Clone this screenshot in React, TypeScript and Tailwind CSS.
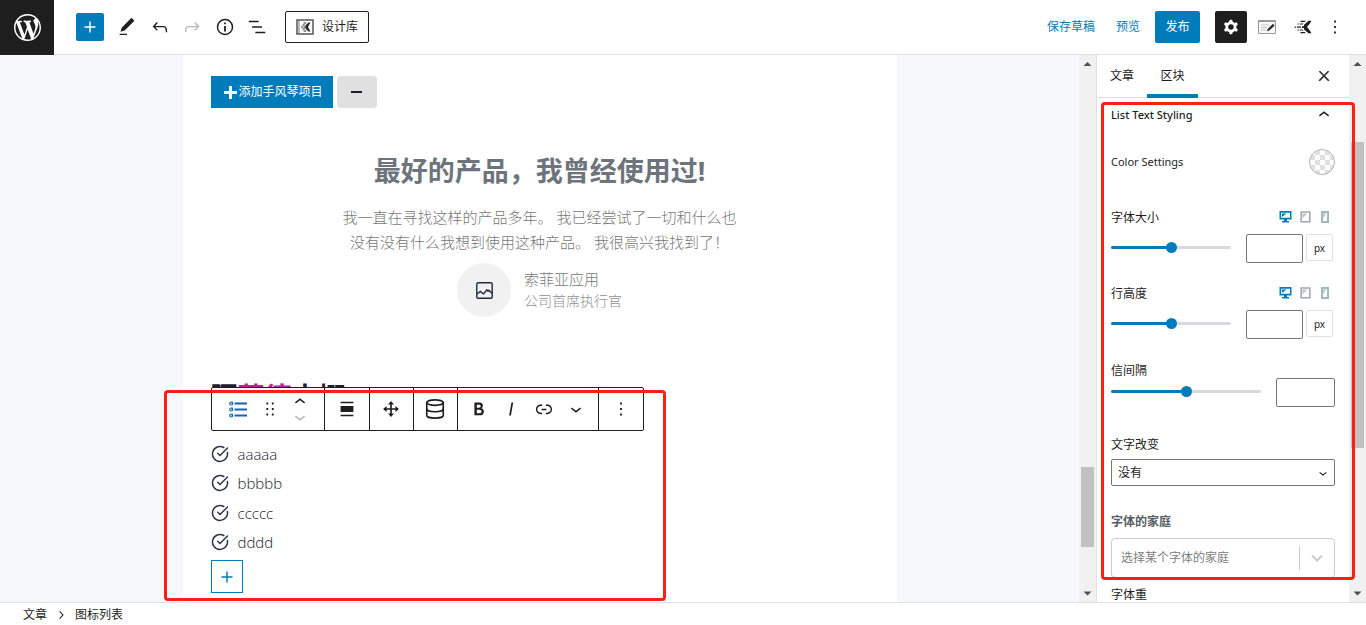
import { useState } from 'react'
import type { ReactNode } from 'react'
import { CircleCheckBig, Database } from 'lucide-react'

const ICONS = {
  plus: 'M18 11.2h-5.2V6h-1.6v5.2H6v1.6h5.2V18h1.6v-5.2H18z',
  edit: 'M20.1 5.1L16.9 2 6.2 12.7l-1.3 4.4 4.5-1.3L20.1 5.1zM4 20.8h8v-1.5H4v1.5z',
  undo: 'M18.3 11.7c-.6-.6-1.4-.9-2.3-.9H6.7l2.9-3.3-1.1-1-4.5 5L8.5 16l1-1-2.7-2.7H16c.5 0 .9.2 1.3.5 1 1 1 3.4 1 4.5v.3h1.5v-.2c0-1.5 0-4.3-1.5-5.7z',
  redo: 'M15.6 6.5l-1.1 1 2.9 3.3H8c-.9 0-1.7.3-2.3.9-1.4 1.5-1.4 4.2-1.4 5.6v.2h1.5v-.3c0-1.1 0-3.5 1-4.5.3-.3.7-.5 1.3-.5h9.2L14.5 15l1.1 1.1 4.6-4.6-4.6-5z',
  outline: 'M13.8 5.2H3v1.5h10.8V5.2zm-3.6 12v1.5H21v-1.5H10.2zm7.2-6H6.6v1.5h10.8v-1.5z',
  info: 'M12 3a9 9 0 1 0 0 18 9 9 0 0 0 0-18zm0 16.4a7.4 7.4 0 1 1 0-14.8 7.4 7.4 0 0 1 0 14.8zM11 7h2v2h-2zM11 10.8h2V17h-2z',
  more: 'M13 19h-2v-2h2v2zm0-6h-2v-2h2v2zm0-6h-2V5h2v2z',
  close: 'M13 11.8l6.1-6.3-1-1-6.1 6.2-6.1-6.2-1 1 6.1 6.3-6.5 6.7 1 1 6.5-6.6 6.5 6.6 1-1z',
  up: 'M6.5 12.4L12 8l5.5 4.4-.9 1.2L12 10l-4.5 3.6-1-1.2z',
  down: 'M17.5 11.6L12 16l-5.5-4.4.9-1.2L12 14l4.5-3.6 1 1.2z',
  right: 'M10.6 6L9.4 7l4.6 5-4.6 5 1.2 1 5.4-6z',
  drag: 'M8 7h2V5H8v2zm0 6h2v-2H8v2zm0 6h2v-2H8v2zm6-14v2h2V5h-2zm0 8h2v-2h-2v2zm0 6h2v-2h-2v2z',
  align: 'M5 4.2h14v1.5H5zM5 8.8h14v6.4H5zM5 18.3h14v1.5H5z',
  move: 'M12 2.5l3.600 4.200h-2.600v4.300h4.300V8.400l4.200 3.600-4.200 3.600v-2.600h-4.300v4.300h2.600L12 21.500l-3.600-4.200h2.600v-4.300H6.700v2.600L2.500 12l4.200-3.600v2.600h4.300V6.700H8.400z',
  bold: 'M14.7 11.3c1-.6 1.5-1.6 1.5-3 0-2.3-1.3-3.4-4-3.4H7v14h5.8c1.4 0 2.5-.3 3.3-1 .8-.7 1.2-1.7 1.2-2.9.1-1.9-.8-3.1-2.6-3.7zm-5.1-4h2.3c.6 0 1.1.1 1.4.4.3.3.5.7.5 1.2s-.2 1-.5 1.200c-.3.3-.8.4-1.400.4H9.600V7.300zm4.600 9c-.4.3-1 .4-1.700.4H9.600v-3.900h2.900c.7 0 1.300.2 1.700.5.4.3.6.8.6 1.500s-.2 1.200-.6 1.500z',
  italic: 'M12.5 5L10 19h1.9l2.5-14z',
  link: 'M15.6 7.2H14v1.5h1.6c2 0 3.7 1.7 3.7 3.7s-1.7 3.7-3.7 3.7H14v1.5h1.6c2.8 0 5.2-2.3 5.2-5.2 0-2.9-2.3-5.2-5.2-5.2zM4.7 12.4c0-2 1.7-3.7 3.7-3.7H10V7.2H8.4c-2.9 0-5.2 2.3-5.2 5.2 0 2.9 2.3 5.2 5.2 5.2H10v-1.5H8.4c-2 0-3.7-1.7-3.7-3.7zm4.6.9h5.3v-1.500H9.300v1.500z',
  cog: 'M10.289 4.836A1 1 0 0111.275 4h1.306a1 1 0 01.987.836l.244 1.466c.787.26 1.503.679 2.108 1.218l1.393-.522a1 1 0 011.216.437l.653 1.13a1 1 0 01-.23 1.273l-1.148.944a6.025 6.025 0 010 2.435l1.149.946a1 1 0 01.23 1.272l-.653 1.13a1 1 0 01-1.216.437l-1.394-.522c-.605.54-1.32.958-2.108 1.218l-.244 1.466a1 1 0 01-.987.836h-1.306a1 1 0 01-.986-.836l-.244-1.466a5.995 5.995 0 01-2.108-1.218l-1.394.522a1 1 0 01-1.217-.436l-.653-1.131a1 1 0 01.23-1.272l1.149-.946a6.026 6.026 0 010-2.435l-1.148-.944a1 1 0 01-.23-1.272l.653-1.131a1 1 0 011.217-.437l1.393.522a5.994 5.994 0 012.108-1.218l.244-1.466zM14.929 12a3 3 0 11-6 0 3 3 0 016 0z',
}

const ITEMS = ['aaaaa', 'bbbbb', 'ccccc', 'dddd']

function Icon({ name, className = 'size-[22px]' }: { name: keyof typeof ICONS; className?: string }) {
  return (
    <svg viewBox="0 0 24 24" fill="currentColor" className={className} aria-hidden="true">
      <path fillRule="evenodd" d={ICONS[name]} />
    </svg>
  )
}

function WordPressLogo() {
  return (
    <svg viewBox="0 0 20 20" fill="currentColor" className="size-[27px]" aria-hidden="true">
      <path d="M20 10c0-5.51-4.49-10-10-10C4.48 0 0 4.49 0 10c0 5.52 4.48 10 10 10 5.51 0 10-4.48 10-10zM7.78 15.37L4.37 6.22c.55-.02 1.17-.08 1.17-.08.5-.06.44-1.13-.06-1.11 0 0-1.45.11-2.37.11-.18 0-.37 0-.58-.01C4.12 2.69 6.87 1.11 10 1.11c2.33 0 4.45.87 6.05 2.34-.68-.11-1.65.39-1.65 1.58 0 .74.45 1.36.9 2.1.35.61.55 1.36.55 2.46 0 1.49-1.4 5-1.4 5l-3.03-8.37c.54-.02.82-.17.82-.17.5-.05.44-1.25-.06-1.22 0 0-1.44.12-2.38.12-.87 0-2.33-.12-2.33-.12-.5-.03-.56 1.2-.06 1.22l.92.08 1.26 3.41zM17.41 10c.24-.64.74-1.87.43-4.25.7 1.29 1.05 2.71 1.05 4.25 0 3.29-1.73 6.24-4.4 7.78.97-2.59 1.94-5.2 2.92-7.78zM6.1 18.09C3.12 16.65 1.11 13.53 1.11 10c0-1.3.23-2.48.72-3.59C3.25 10.3 4.67 14.2 6.1 18.09zm4.03-6.63l2.58 6.98c-.86.29-1.76.45-2.71.45-.79 0-1.57-.11-2.29-.33.81-2.38 1.62-4.74 2.42-7.1z" />
    </svg>
  )
}

// Kadence mark: speed lines running into an arrow
function KadenceIcon() {
  return (
    <svg viewBox="0 0 18 14" fill="currentColor" className="h-[14px] w-[18px]" aria-hidden="true">
      <path d="M17.500.8h-3L10 4.700V6.200H8v1.800h2v1.400l4.500 3.900h3L15.500 10 13 7l2.500-3z" />
      <path d="M6.500.8H12l-1.400 1.300H6.500zM3.500 3.400h1.300v1.200H3.500zM5.800 3.400h3.700l-1 1.200H5.800zM.5 6.400h1.400v1.300H.5zM2.900 6.400H7v1.300H2.900zM3.500 9.400h1.300v1.200H3.500zM5.800 9.400h2.900l1 1.200H5.800zM6.500 12h4.100l1.400 1.300H6.500z" />
    </svg>
  )
}

function DesignIcon() {
  return (
    <svg viewBox="0 0 18 16" className="h-4 w-[18px]" aria-hidden="true">
      <path d="M1 1h16v14H1z" fill="none" stroke="#555" strokeWidth="1.500" />
      <path d="M3 1v14" stroke="#777" />
      <g fill="#2b2b2b">
        <path d="M14.500 3.500h-2L9.500 6.200v1.200H8.200v1.300h1.300v1.100l3 2.700h2L12 8z" />
        <path d="M7.500 3.500h3.200l-.9 1H7.500zM6.500 5.500h2.300v1H6.500zM5 7.500h2.500v1H5zM6.500 9.500h2.300v1H6.500zM7.500 11.500h2.300l.9 1H7.500z" />
      </g>
    </svg>
  )
}

function TemplateIcon() {
  return (
    <svg viewBox="0 0 18 14" className="h-[14px] w-[18px]" fill="none" aria-hidden="true">
      <path d="M.5.5h17v13H.5z" stroke="#999" fill="#f7f7f7" />
      <path d="M.5 1.500h17" stroke="#999" />
      <path d="M3 5h8M3 7.500h6.500M3 10h5" stroke="#c4c4c4" />
      <path d="M9 11.300l.7-2.300 5.200-5.200 1.700 1.600-5.300 5.200z" fill="#2b2b2b" />
    </svg>
  )
}

function IconListIcon() {
  return (
    <svg viewBox="0 0 18 17" className="h-[17px] w-[18px]" fill="none" stroke="#1464ae" aria-hidden="true">
      <circle cx="2.200" cy="2.500" r="1.500" strokeWidth="1.200" />
      <circle cx="2.200" cy="8.500" r="1.500" strokeWidth="1.200" />
      <circle cx="2.200" cy="14.500" r="1.500" strokeWidth="1.200" />
      <path d="M5.500 2.500H18M5.500 8.500H18M5.500 14.500H18" strokeWidth="1.800" />
      <path d="M2 2.600L4.200.5M2 8.600l2.200-2.100M2 14.600l2.200-2.100" strokeWidth=".8" />
    </svg>
  )
}

function HeaderButton({ label, children, className = '' }: { label: string; children: ReactNode; className?: string }) {
  return (
    <button type="button" aria-label={label} className={`flex size-8 items-center justify-center rounded-xs ${className}`}>
      {children}
    </button>
  )
}

function Header() {
  return (
    <header className="flex h-[55px] shrink-0 items-center border-b border-[#e0e0e0] bg-white">
      <a href="#dashboard" aria-label="WordPress" className="-mb-px flex h-[55px] w-[54px] items-center justify-center bg-[#1e1e1e] text-white">
        <WordPressLogo />
      </a>
      <button type="button" aria-label="添加区块" className="ml-[22px] flex size-7 items-center justify-center rounded-xs bg-[#007cba] text-white">
        <Icon name="plus" />
      </button>
      <div className="ml-[7px] flex w-[162px] justify-between">
        <HeaderButton label="工具"><Icon name="edit" /></HeaderButton>
        <HeaderButton label="撤销"><Icon name="undo" /></HeaderButton>
        <HeaderButton label="重做" className="text-[#b9b9b9]"><Icon name="redo" /></HeaderButton>
        <HeaderButton label="详情"><Icon name="info" /></HeaderButton>
        <HeaderButton label="列表视图"><Icon name="outline" /></HeaderButton>
      </div>
      <button type="button" className="ml-3 flex h-8 items-center gap-2 rounded-xs border border-[#1e1e1e] px-[10px]">
        <DesignIcon />
        设计库
      </button>

      <div className="ml-auto flex items-center pr-[15px]">
        <button type="button" className="text-[#007cba]">保存草稿</button>
        <button type="button" className="ml-[21px] text-[#007cba]">预览</button>
        <button type="button" className="ml-[15px] h-8 w-[45px] rounded-xs bg-[#007cba] text-white">发布</button>
        <HeaderButton label="设置" className="ml-[15px] bg-[#1e1e1e] text-white"><Icon name="cog" /></HeaderButton>
        <HeaderButton label="模板" className="ml-1"><TemplateIcon /></HeaderButton>
        <HeaderButton label="Kadence" className="ml-1"><KadenceIcon /></HeaderButton>
        <HeaderButton label="选项"><Icon name="more" /></HeaderButton>
      </div>
    </header>
  )
}

// Static scrollbar track; the thumb sits in the flow between the two arrows
function Scrollbar({ thumb }: { thumb: string }) {
  return (
    <div className="flex w-[17px] shrink-0 flex-col items-center bg-[#f1f1f1]" aria-hidden="true">
      <svg viewBox="0 0 17 17" className="size-[17px] shrink-0"><path d="M4.500 11h8l-4-4z" fill="#505050" /></svg>
      <div className={`w-[13px] shrink-0 bg-[#c1c1c1] ${thumb}`} />
      <svg viewBox="0 0 17 17" className="mt-auto size-[17px] shrink-0"><path d="M4.500 6.500h8l-4 4z" fill="#505050" /></svg>
    </div>
  )
}

function ToolButton({ label, className = '', children }: { label: string; className?: string; children: ReactNode }) {
  return (
    <button type="button" aria-label={label} className={`flex h-full items-center justify-center ${className}`}>
      {children}
    </button>
  )
}

function BlockToolbar() {
  return (
    <div className="absolute top-[10px] left-0 flex h-11 divide-x divide-[#1e1e1e] rounded-xs border border-[#1e1e1e] bg-white">
      <div className="flex px-3">
        <ToolButton label="图标列表" className="w-7"><IconListIcon /></ToolButton>
        <ToolButton label="拖动" className="w-9"><Icon name="drag" /></ToolButton>
        <div className="flex w-6 flex-col items-center justify-center">
          <button type="button" aria-label="上移" className="flex h-[15px] items-center"><Icon name="up" /></button>
          <button type="button" aria-label="下移" className="flex h-[15px] items-center text-[#b5b5b5]"><Icon name="down" /></button>
        </div>
      </div>
      <ToolButton label="对齐" className="w-[45px]"><Icon name="align" /></ToolButton>
      <ToolButton label="间距" className="w-11"><Icon name="move" className="size-5" /></ToolButton>
      <ToolButton label="动态内容" className="w-11"><Database size={22} strokeWidth={1.8} /></ToolButton>
      <div className="flex w-[141px] px-[5px]">
        <ToolButton label="加粗" className="flex-1"><Icon name="bold" /></ToolButton>
        <ToolButton label="斜体" className="flex-1"><Icon name="italic" /></ToolButton>
        <ToolButton label="链接" className="flex-1"><Icon name="link" /></ToolButton>
        <ToolButton label="更多" className="flex-1"><Icon name="down" /></ToolButton>
      </div>
      <ToolButton label="选项" className="w-11"><Icon name="more" /></ToolButton>
    </div>
  )
}

function Canvas() {
  return (
    <main className="min-w-0 flex-1 overflow-hidden bg-[#f5f9fc]">
      <div className="mx-auto min-h-full w-full max-w-[714px] bg-white px-7 pt-[21px]">
        <div className="flex gap-1">
          <button type="button" className="flex h-8 items-center gap-[2px] bg-[#007cba] pr-[10px] pl-[13px] text-white">
            <svg viewBox="0 0 13 13" className="size-[13px]" aria-hidden="true">
              <path d="M6.500 0v13M0 6.500h13" stroke="currentColor" strokeWidth="3" />
            </svg>
            添加手风琴项目
          </button>
          <button type="button" aria-label="删除" className="flex h-8 w-10 items-center justify-center rounded-sm bg-[#e0e0e0]">
            <span className="h-[2px] w-[11px] bg-[#1a202c]" />
          </button>
        </div>

        {/* Testimonial */}
        <section className="text-center">
          <h2 className="mt-[43px] text-[27px] leading-10 font-bold text-[#6d747c]">最好的产品，我曾经使用过!</h2>
          <p className="mt-[14px] text-[15px] leading-[25px] font-light text-[#777]">
            我一直在寻找这样的产品多年。 我已经尝试了一切和什么也
            <br />
            没有没有什么我想到使用这种产品。 我很高兴我找到了！
          </p>
          <div className="mt-2 flex items-center justify-center gap-[13px] text-left font-light">
            <span className="flex size-[54px] items-center justify-center rounded-full bg-[#f1f1f1]">
              <svg viewBox="0 0 17 17" className="size-[17px]" fill="none" stroke="#1f2a40" strokeWidth="1.400" aria-hidden="true">
                <rect x=".8" y=".8" width="15.400" height="15.400" rx="1.200" />
                <path d="M1 12l3.300-2.500 1.700 1.300 1.700 1 3-4 1.300 1.500 1-1L16 11.500" />
              </svg>
            </span>
            <div>
              <div className="text-[15px] leading-[22px] text-[#777]">索菲亚应用</div>
              <div className="text-[14px] leading-[22px] text-[#909090]">公司首席执行官</div>
            </div>
          </div>
        </section>

        {/* Icon list with its toolbar over the heading above it */}
        <section className="relative mt-[60px]">
          <h2 className="text-[27px] leading-10 font-bold text-[#1a202c]">
            隔<span className="text-[#c41ba0]">蓝德</span>大概
          </h2>
          <BlockToolbar />
          <ul className="mt-[22px] flex h-[118px] flex-col">
            {ITEMS.map(item => (
              <li key={item} className="flex flex-1 items-center gap-[9px] font-['Open_Sans','Noto_Sans',sans-serif] text-[15px] font-light text-[#1a202c]">
                <CircleCheckBig size={18} strokeWidth={2} className="text-[#2d3748]" />
                {item}
              </li>
            ))}
          </ul>
          <button type="button" aria-label="添加项目" className="mt-[3px] flex h-[33px] w-8 items-center justify-center border border-[#007cba] text-[#007cba]">
            <Icon name="plus" />
          </button>
          <div className="pointer-events-none absolute top-[13px] -left-[47px] h-[211px] w-[502px] rounded-sm border-3 border-[#ff1f12]" />
        </section>
      </div>
    </main>
  )
}

function DeviceIcons() {
  return (
    <div className="flex items-center gap-2 pr-[6px]">
      <button type="button" aria-label="桌面">
        <svg viewBox="0 0 13 12" className="h-3 w-[13px]" aria-hidden="true">
          <path fillRule="evenodd" d="M.5 0h12v8.500H8v1.500h2V11.500H3V10h2V8.500H.5zM2 1.800v4.900h9V1.800z" fill="#007cba" />
          <path d="M2.800 2.500h5L2.800 6z" fill="#007cba" />
        </svg>
      </button>
      <button type="button" aria-label="平板">
        <svg viewBox="0 0 11 12" className="h-3 w-[11px]" fill="none" aria-hidden="true">
          <path d="M1.200 1h8.600v9.800H1.200z" stroke="#a0a9b5" strokeWidth="1.600" />
          <path d="M2.500 2.500h5l-5 5z" fill="#c0c6ce" />
        </svg>
      </button>
      <button type="button" aria-label="手机" className="pl-[2px]">
        <svg viewBox="0 0 8 12" className="h-3 w-2" fill="none" aria-hidden="true">
          <path d="M1 1h6v10H1z" stroke="#a3b8bd" strokeWidth="2" />
          <path d="M2 2.500h3.500L2 7z" fill="#b3ccc8" />
        </svg>
      </button>
    </div>
  )
}

interface RangeControlProps {
  id: string
  label: string
  unit?: string
  className: string
}

function RangeControl({ id, label, unit, className }: RangeControlProps) {
  const [value, setValue] = useState(50)

  return (
    <div className={className}>
      <div className="flex h-4 items-center justify-between">
        <label htmlFor={id} className="pt-[2px]">{label}</label>
        {unit && <DeviceIcons />}
      </div>
      <div className={`flex items-start ${unit ? 'mt-[9px] pr-[2px]' : ''}`}>
        <div className="flex h-[27px] min-w-0 flex-1 items-center">
          <input
            id={id}
            type="range"
            value={value}
            onChange={e => setValue(Number(e.target.value))}
            className="h-[3px] w-full appearance-none rounded-full [&::-webkit-slider-thumb]:size-[11px] [&::-webkit-slider-thumb]:appearance-none [&::-webkit-slider-thumb]:rounded-full [&::-webkit-slider-thumb]:bg-[#007cba]"
            style={{ background: `linear-gradient(to right, #007cba ${value}%, #d7dade ${value}%)` }}
          />
        </div>
        <input
          type="text"
          aria-label={label}
          className={`ml-[15px] h-[29px] rounded-xs border border-[#757575] px-2 ${unit ? 'w-[57px]' : 'w-[59px]'}`}
        />
        {unit && (
          <button type="button" className="ml-[3px] size-[27px] rounded-xs border border-[#e2e2e2] text-[10px]">{unit}</button>
        )}
      </div>
    </div>
  )
}

function Sidebar() {
  return (
    <aside className="relative flex w-[270px] shrink-0 border-l border-[#e0e0e0] bg-white">
      <div className="min-w-0 flex-1 overflow-hidden">
        <div className="flex h-[43px] border-b border-[#e0e0e0]">
          <button type="button" className="w-[50px]">文章</button>
          <button type="button" className="-mb-px w-[51px] border-b-4 border-[#007cba] pt-[3px]">区块</button>
          <button type="button" aria-label="关闭" className="mr-[17px] ml-auto">
            <Icon name="close" className="size-4 stroke-current stroke-1" />
          </button>
        </div>

        <div className="px-[14px]">
          <button type="button" className="flex h-[34px] w-full items-center justify-between text-[11px] font-medium">
            List Text Styling
            <Icon name="up" />
          </button>
          <div className="mt-[17px] flex h-[26px] items-center justify-between text-[11px]">
            <span>Color Settings</span>
            <button
              type="button"
              aria-label="Color Settings"
              className="size-[26px] rounded-full border border-[#b4b4b4] bg-[conic-gradient(#e0e0e0_25%,#fff_0_50%,#e0e0e0_0_75%,#fff_0)] bg-size-[10px_10px]"
            />
          </div>

          <RangeControl id="font-size" label="字体大小" unit="px" className="mt-[34px]" />
          <RangeControl id="line-height" label="行高度" unit="px" className="mt-[22px]" />
          <RangeControl id="letter-spacing" label="信间隔" className="mt-[23px]" />

          <label htmlFor="transform" className="mt-[29px] flex h-4 items-center pt-[2px]">文字改变</label>
          <div className="mt-[7px] grid items-center">
            <select id="transform" className="col-start-1 row-start-1 h-[27px] appearance-none rounded-xs border border-[#757575] px-[6px]">
              <option>没有</option>
            </select>
            <Icon name="down" className="pointer-events-none col-start-1 row-start-1 mr-1 size-4 justify-self-end" />
          </div>

          <label htmlFor="family" className="mt-[27px] flex h-4 items-center pt-[2px] font-bold text-[#555d66]">字体的家庭</label>
          <div className="mt-[9px] flex h-10 items-center rounded-sm border border-[#ccc]">
            <input id="family" type="text" placeholder="选择某个字体的家庭" className="min-w-0 flex-1 px-[9px] placeholder:text-[#808080]" />
            <span className="h-6 w-px bg-[#ccc]" />
            <svg viewBox="0 0 34 12" className="h-3 w-[34px]" fill="none" stroke="#ccc" strokeWidth="2" aria-hidden="true">
              <path d="M12 3.500l5 5 5-5" />
            </svg>
          </div>

          <div className="mt-[9px] flex h-4 items-center">字体重</div>
        </div>
      </div>
      <Scrollbar thumb="mt-[70px] h-[306px]" />
      <div className="pointer-events-none absolute top-[47px] right-[11px] left-1 h-[478px] rounded-sm border-3 border-[#ff1f12]" />
    </aside>
  )
}

export default function App() {
  return (
    <div className="flex h-screen flex-col bg-white font-['Noto_Sans','Noto_Sans_CJK_SC',sans-serif] text-[12px] leading-4 text-[#1e1e1e]">
      <Header />
      <div className="flex min-h-0 flex-1">
        <Canvas />
        <Scrollbar thumb="mt-[395px] h-20" />
        <Sidebar />
      </div>
      <footer className="flex h-[23px] shrink-0 items-center border-t border-[#e0e0e0] pt-[2px] pl-[23px]">
        <a href="#post">文章</a>
        <Icon name="right" className="mx-[6px] size-4" />
        <span>图标列表</span>
      </footer>
    </div>
  )
}
